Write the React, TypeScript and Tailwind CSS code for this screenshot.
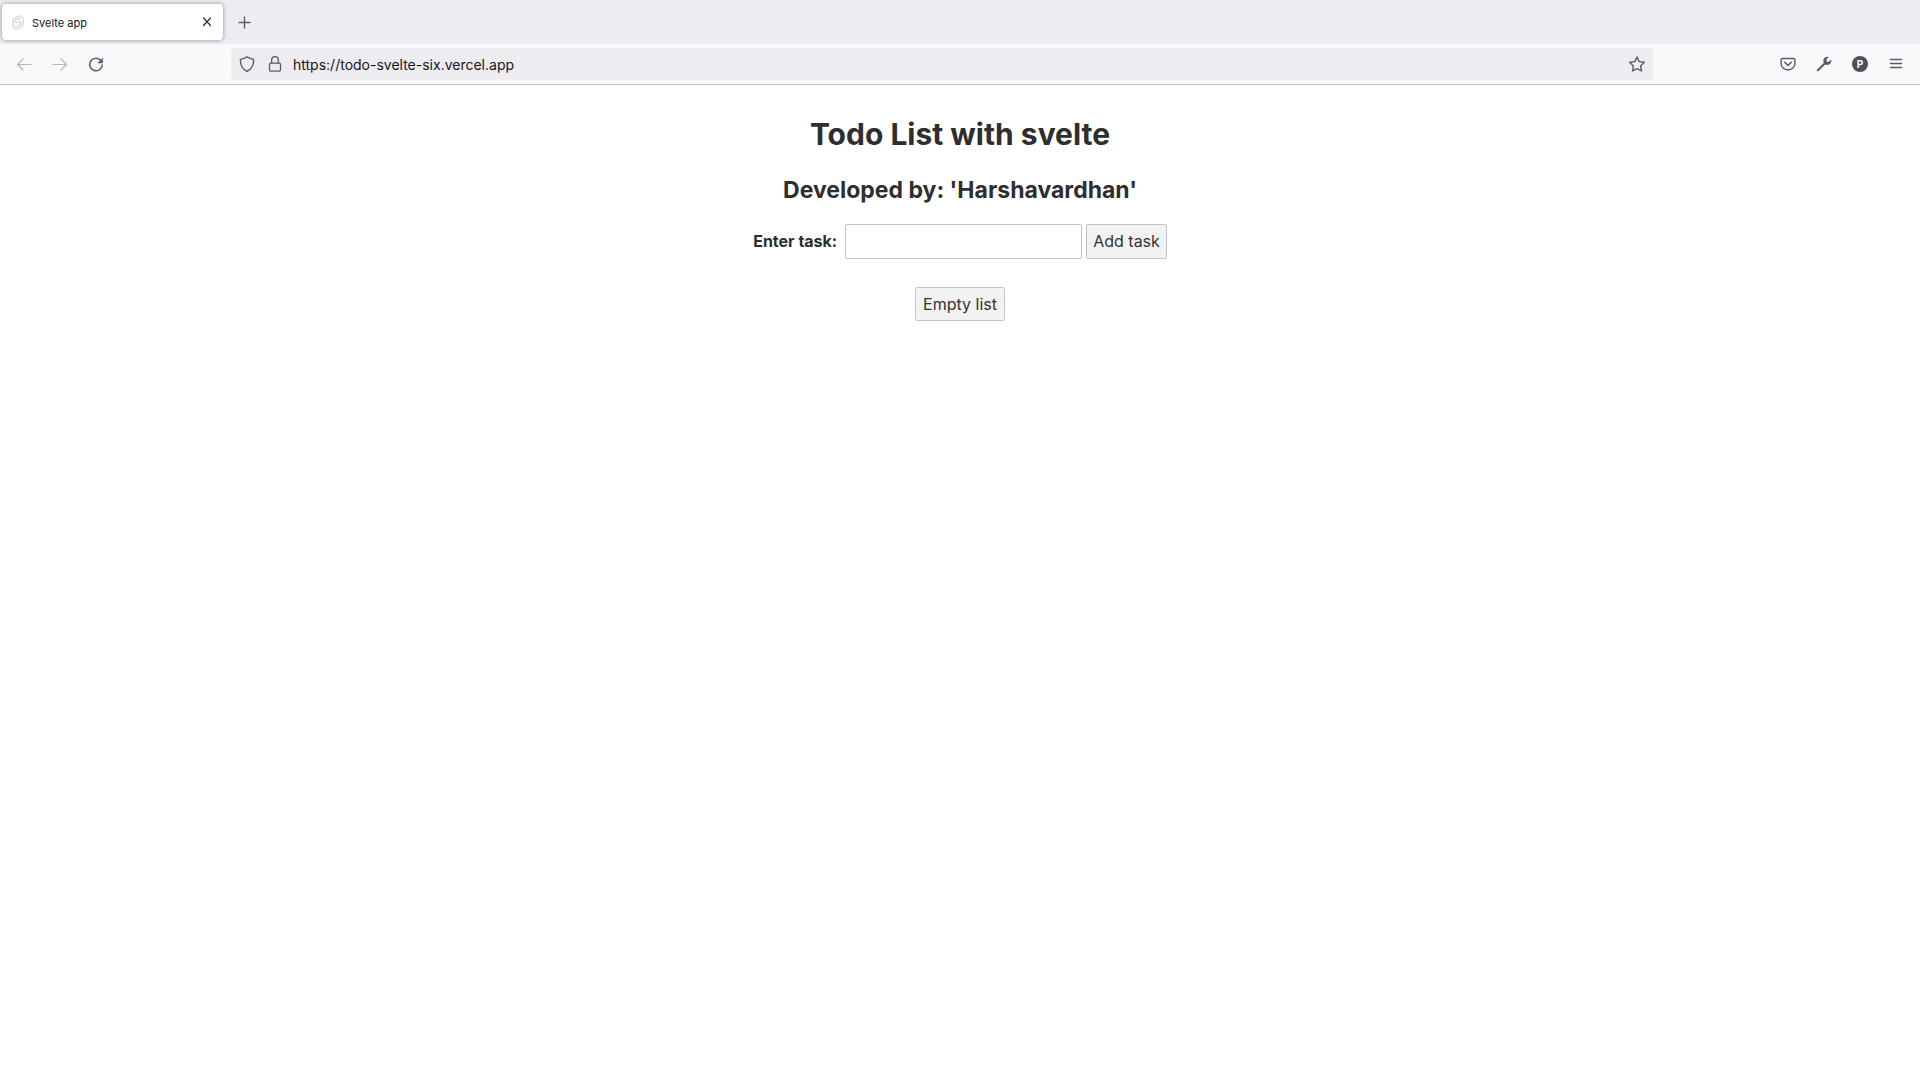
import React from "react";

type IconProps = { children: React.ReactNode; className?: string };

function Icon({ children, className = "size-4" }: IconProps) {
  return (
    <svg
      viewBox="0 0 16 16"
      className={className}
      fill="none"
      stroke="currentColor"
      strokeWidth="1.2"
      strokeLinecap="round"
      strokeLinejoin="round"
      aria-hidden="true"
    >
      {children}
    </svg>
  );
}

function ToolButton({ label, disabled, children }: { label: string; disabled?: boolean; children: React.ReactNode }) {
  return (
    <button
      type="button"
      aria-label={label}
      disabled={disabled}
      className="flex size-9 items-center justify-center text-[#5b5b66] disabled:text-[#b4b4ba]"
    >
      {children}
    </button>
  );
}

function TabStrip() {
  return (
    <div className="flex h-11 items-center bg-[#ededf1] px-0.5">
      <div className="flex h-9 w-[221px] items-center rounded bg-white pr-2 pl-2.5 shadow-[0_0_4px_rgba(70,70,95,0.6)]">
        <svg viewBox="0 0 12 15" className="h-[15px] w-3" fill="none" stroke="#d4d4d4" aria-hidden="true">
          <path
            d="M5.6 1.500 2.800 3.300C.9 4.500.3 6.200 1.200 7.800.5 9 .5 10.500 1.300 11.700 2.400 13.700 4.700 14.200 6.400 13.300L9.200 11.600C11.100 10.400 11.700 8.600 10.900 7 11.500 6 11.600 4.400 10.800 3.200 9.600 1.200 7.300.600 5.600 1.500Z"
            strokeWidth="1.2"
          />
          <path d="M8.700 4.900C8.500 3.500 7.200 3.100 6.200 3.700L4 5.100C2.800 6 3.300 7.800 4.900 7.500L7.300 7.100C8.900 6.900 9.300 8.800 8.100 9.600L5.800 11.100C4.700 11.800 3.500 11.300 3.300 10" strokeWidth="1.2" />
        </svg>
        <span className="ml-2 flex-1 pt-0.5 text-[11px] text-[#15141a]">Svelte app</span>
        <button type="button" aria-label="Close tab" className="flex size-4 items-center justify-center text-[#2b2a33]">
          <Icon>
            <path d="M4.500 4l7 7.500M11.500 4l-7 7.500" />
          </Icon>
        </button>
      </div>
      <button type="button" aria-label="New tab" className="ml-[3px] flex size-9 items-center justify-center text-[#5b5b66]">
        <Icon>
          <path d="M8.500 3v11M3 8.500h11" strokeWidth="1.400" />
        </Icon>
      </button>
    </div>
  );
}

function Toolbar() {
  return (
    <div className="flex h-[41px] items-center border-b border-[#c2c2c6] bg-[#f9f9fb] px-1.5">
      <ToolButton label="Back" disabled>
        <Icon>
          <path d="M1.500 8.500h13.500M7 3L1.500 8.500 7 14" />
        </Icon>
      </ToolButton>
      <ToolButton label="Forward" disabled>
        <Icon>
          <path d="M1 8.500h13.500M9 3l5.500 5.500L9 14" />
        </Icon>
      </ToolButton>
      <ToolButton label="Reload">
        <Icon>
          <path d="M13.300 5A6.300 6.300 0 1 0 14.300 9" strokeWidth="1.500" />
          <path d="M14.600 2.400v4.500h-4.500z" fill="currentColor" strokeWidth=".6" />
        </Icon>
      </ToolButton>
      <form className="mx-[117px] flex h-8 flex-1 items-center rounded bg-[#ededf1] px-2 text-[#5b5b66]">
        <Icon>
          <path d="M8 .9c2.100 1.400 4.200 2.100 6.500 2.500.500 5.200-1.300 9.300-6.500 12-5.200-2.700-7-6.800-6.500-12C3.800 3 5.900 2.300 8 .9z" strokeWidth="1.400" />
        </Icon>
        <Icon className="ml-3 size-4">
          <rect x="2.500" y="7.200" width="11" height="8" rx="1.400" strokeWidth="1.300" />
          <path d="M4.700 7V3.900a3.300 3.300 0 0 1 6.600 0V7" strokeWidth="1.300" />
        </Icon>
        <input
          aria-label="Address"
          defaultValue="https://todo-svelte-six.vercel.app"
          className="ml-2.5 min-w-0 flex-1 bg-transparent pt-0.5 text-sm text-[#15141a] outline-none"
        />
        <button type="button" aria-label="Bookmark this page">
          <Icon>
            <path d="M8 1l2.200 4.600 5.100.7-3.700 3.600.9 5.100L8 12.600 3.500 15l.9-5.100L.7 6.300l5.100-.7z" strokeWidth="1.400" />
          </Icon>
        </button>
      </form>
      <ToolButton label="Save to Pocket">
        <Icon>
          <path d="M2.400 2.500h11.200a1.300 1.300 0 0 1 1.300 1.300V7.500a6.900 6.500 0 0 1-13.800 0V3.800A1.300 1.300 0 0 1 2.400 2.500z" strokeWidth="1.400" />
          <path d="M4.700 6.200L8 9.400l3.300-3.200" strokeWidth="1.500" />
        </Icon>
      </ToolButton>
      <ToolButton label="Developer tools">
        <Icon>
          <path d="M1.800 14.300L9 7.200" strokeWidth="2" />
          <path
            d="M12.800 .9A4.300 4.300 0 0 0 7.300 5.800a4.300 4.300 0 0 0 2.600 3 4.300 4.300 0 0 0 5.300-5.200l-2.700 2.500-1.800-.5-.4-1.900z"
            fill="currentColor"
            stroke="none"
          />
        </Icon>
      </ToolButton>
      <ToolButton label="Profile">
        <span className="flex size-4 items-center justify-center rounded-full bg-[#4f4e5a] text-[10px] leading-none font-bold text-white">
          P
        </span>
      </ToolButton>
      <ToolButton label="Menu">
        <Icon>
          <path d="M2.500 3.500h11M2.500 7.500h11M2.500 11.500h11" strokeWidth="1.400" />
        </Icon>
      </ToolButton>
    </div>
  );
}

const control = "rounded-xs border border-[#c4c4c4] text-base text-[#333333]";

export default function App() {
  return (
    <div className="min-h-screen bg-white font-['Inter',sans-serif]">
      <header>
        <TabStrip />
        <Toolbar />
      </header>
      <main className="flex flex-col items-center px-2 pt-[29px] text-center text-[#2e2e2e]">
        <h1 className="text-3xl leading-10 font-bold">Todo List with svelte</h1>
        <h2 className="mt-5 text-[23px] leading-8 font-bold">Developed by: 'Harshavardhan'</h2>
        <form className="mt-[18px] flex items-start gap-1">
          <label htmlFor="task" className="mr-1 text-base leading-[34px] font-bold">
            Enter task:
          </label>
          <input id="task" className={`${control} h-[35px] w-[237px] bg-white px-1.5 outline-none`} />
          <button type="button" className={`${control} h-[35px] bg-[#f2f2f2] px-1.5 pb-0.5`}>
            Add task
          </button>
        </form>
        <button type="button" className={`${control} mt-7 h-[34px] bg-[#f2f2f2] px-[7px]`}>
          Empty list
        </button>
      </main>
    </div>
  );
}
